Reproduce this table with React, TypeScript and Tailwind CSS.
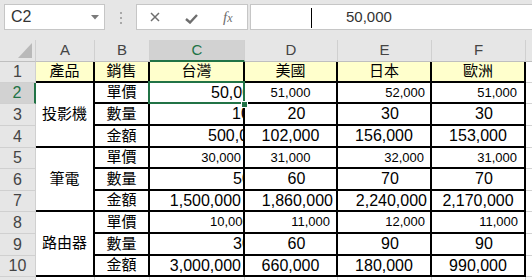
import React from 'react';

type Cell = { t: string; cls: string };

const big = 'text-[16px]';
const small = 'text-[13px]';
const qty = 'justify-center pl-[12px] text-[16px]';

const groups = [
    { name: '投影機', start: 2 },
    { name: '筆電', start: 5 },
    { name: '路由器', start: 8 },
];

const rows: { n: number; b: string; cells: Cell[] }[] = [
    {
        n: 2, b: '單價', cells: [
            { t: '50,000', cls: `${big} pl-[61px]` },
            { t: '51,000', cls: `${small} justify-center` },
            { t: '52,000', cls: `${small} justify-end pr-[5px]` },
            { t: '51,000', cls: `${small} justify-end pr-[7px]` },
        ]
    },
    {
        n: 3, b: '數量', cells: [
            { t: '10', cls: `${big} pl-[82px]` },
            { t: '20', cls: qty },
            { t: '30', cls: qty },
            { t: '30', cls: qty },
        ]
    },
    {
        n: 4, b: '金額', cells: [
            { t: '500,000', cls: `${big} pl-[58px]` },
            { t: '102,000', cls: `${big} justify-center` },
            { t: '156,000', cls: `${big} justify-center` },
            { t: '153,000', cls: `${big} justify-center` },
        ]
    },
    {
        n: 5, b: '單價', cells: [
            { t: '30,000', cls: `${small} justify-end pr-[2px]` },
            { t: '31,000', cls: `${small} justify-center` },
            { t: '32,000', cls: `${small} justify-end pr-[6px]` },
            { t: '31,000', cls: `${small} justify-end pr-[7px]` },
        ]
    },
    {
        n: 6, b: '數量', cells: [
            { t: '50', cls: `${big} pl-[83px]` },
            { t: '60', cls: qty },
            { t: '70', cls: qty },
            { t: '70', cls: qty },
        ]
    },
    {
        n: 7, b: '金額', cells: [
            { t: '1,500,000', cls: `${big} justify-end pr-[2px]` },
            { t: '1,860,000', cls: `${big} justify-end pr-[3px]` },
            { t: '2,240,000', cls: `${big} justify-end pr-[3px]` },
            { t: '2,170,000', cls: `${big} justify-center` },
        ]
    },
    {
        n: 8, b: '單價', cells: [
            { t: '10,000', cls: `${small} pl-[60px]` },
            { t: '11,000', cls: `${small} justify-end pr-[6px]` },
            { t: '12,000', cls: `${small} justify-end pr-[5px]` },
            { t: '11,000', cls: `${small} justify-end pr-[6px]` },
        ]
    },
    {
        n: 9, b: '數量', cells: [
            { t: '30', cls: `${big} pl-[83px]` },
            { t: '60', cls: qty },
            { t: '90', cls: qty },
            { t: '90', cls: qty },
        ]
    },
    {
        n: 10, b: '金額', cells: [
            { t: '3,000,000', cls: `${big} justify-end pr-[2px]` },
            { t: '660,000', cls: `${big} justify-center` },
            { t: '180,000', cls: `${big} justify-center` },
            { t: '990,000', cls: `${big} justify-center` },
        ]
    },
];

const headers = ['產品', '銷售', '台灣', '美國', '日本', '歐洲'];
const letters = ['A', 'B', 'C', 'D', 'E', 'F'];

const dataCell = 'flex items-center overflow-hidden whitespace-nowrap border-r-2 border-b-2 border-black text-black';
const cjk = 'text-[15px]';

const RowHead = ({ n }: { n: number }) => {
    const active = n === 2;
    return (
        <div
            className={
                active
                    ? 'flex items-center justify-center border-b border-b-[#d0d0d0] border-r-2 border-r-[#217346] bg-[#d2d2d2] text-[16px] text-[#217346]'
                    : 'flex items-center justify-center border-b border-r border-[#d0d0d0] bg-[#e6e6e6] text-[16px] text-[#444]'
            }
        >
            {n}
        </div>
    );
};

const App = () => {
    return (
        <div className="h-[280px] w-[532px] overflow-hidden bg-white font-['Liberation_Sans','Noto_Sans_CJK_TC',sans-serif]">
            {/* formula bar */}
            <div className="flex h-[40px] items-start bg-[#e6e6e6] pl-[4px] pt-[4px]">
                <div className="relative flex h-[26px] w-[101px] items-center border border-[#c6c6c6] bg-white pl-[6px] text-[16px] text-[#333]">
                    C2
                    <svg className="absolute right-[5px] top-[10px]" width="8" height="5" viewBox="0 0 8 5">
                        <path d="M0 0h8L4 4.5z" fill="#7a7a7a" />
                    </svg>
                </div>
                <div className="ml-[15px] mt-[8px] flex flex-col gap-[3px]">
                    <div className="h-[2px] w-[2px] bg-[#a8a8a8]" />
                    <div className="h-[2px] w-[2px] bg-[#a8a8a8]" />
                    <div className="h-[2px] w-[2px] bg-[#a8a8a8]" />
                </div>
                <div className="ml-[14px] flex h-[26px] w-[112px] items-center border border-[#c6c6c6] bg-white">
                    <svg className="ml-[13px]" width="10" height="10" viewBox="0 0 10 10">
                        <path d="M1 1L9 9M9 1L1 9" stroke="#6e6e6e" strokeWidth="1.5" />
                    </svg>
                    <svg className="ml-[25px] mt-[3px]" width="13" height="10" viewBox="0 0 13 10">
                        <path d="M1 5L5 8.5L12 1" stroke="#6e6e6e" strokeWidth="2.4" fill="none" />
                    </svg>
                    <span className="ml-[25px] font-['Liberation_Serif',serif] text-[15px] italic text-[#6e6e6e]">
                        f<span className="text-[12px]">x</span>
                    </span>
                </div>
                <div className="relative ml-[2px] flex h-[26px] flex-1 items-center border-y border-l border-[#c6c6c6] bg-white pl-[95px] text-[15px] text-[#333]">
                    <div className="absolute left-[60px] top-[3px] h-[20px] w-[1px] bg-black" />
                    50,000
                </div>
            </div>

            {/* sheet */}
            <div className="relative grid grid-cols-[36px_59px_55px_95px_93px_94px_94px_6px] grid-rows-[22px_21px_21px_22px_22px_21px_22px_21px_22px_22px_21px_22px]">
                {/* corner */}
                <div className="relative border-b border-r border-b-[#bfbfbf] border-r-[#d0d0d0] bg-[#e6e6e6]">
                    <svg className="absolute left-[18px] top-[3px]" width="14" height="15" viewBox="0 0 14 15">
                        <path d="M0 15H14V0z" fill="#b9b9b9" />
                    </svg>
                </div>
                {letters.map((l) => (
                    <div
                        key={l}
                        className={
                            l === 'C'
                                ? 'flex items-center justify-center border-r border-r-[#d0d0d0] border-b-2 border-b-[#217346] bg-[#d2d2d2] text-[15px] text-[#217346]'
                                : 'flex items-center justify-center border-b border-r border-b-[#bfbfbf] border-r-[#d0d0d0] bg-[#e6e6e6] text-[15px] text-[#444]'
                        }
                    >
                        {l}
                    </div>
                ))}
                <div className="border-b border-b-[#bfbfbf] bg-[#e6e6e6]" />

                {/* row 1 */}
                <RowHead n={1} />
                {headers.map((h) => (
                    <div key={h} className={`${dataCell} ${cjk} justify-center bg-[#ffffcc]`}>
                        {h}
                    </div>
                ))}
                <div className="border-b border-[#d4d4d4]" />

                {rows.map((r) => {
                    const g = groups.find((x) => x.start === r.n);
                    return (
                        <React.Fragment key={r.n}>
                            <RowHead n={r.n} />
                            {g && (
                                <div className={`${dataCell} ${cjk} row-span-3 justify-center bg-white`}>{g.name}</div>
                            )}
                            <div className={`${dataCell} ${cjk} justify-center bg-white`}>{r.b}</div>
                            {r.cells.map((c, i) => (
                                <div key={i} className={`${dataCell} ${c.cls} bg-white`}>
                                    {c.t}
                                </div>
                            ))}
                            <div className="border-b border-[#d4d4d4]" />
                        </React.Fragment>
                    );
                })}

                {/* row 11 */}
                <RowHead n={11} />
                <div className="border-r border-[#d4d4d4]" />
                <div className="border-r border-[#d4d4d4]" />
                <div className="border-r border-[#d4d4d4]" />
                <div className="border-r border-[#d4d4d4]" />
                <div className="border-r border-[#d4d4d4]" />
                <div className="border-r border-[#d4d4d4]" />
                <div />

                {/* active cell C2 */}
                <div className="pointer-events-none absolute left-[148px] top-[41px] h-[23px] w-[97px] border-2 border-[#217346]" />
                <div className="pointer-events-none absolute left-[241px] top-[61px] h-[7px] w-[7px] border border-white bg-[#217346]" />
            </div>
        </div>
    );
};

export default App;
